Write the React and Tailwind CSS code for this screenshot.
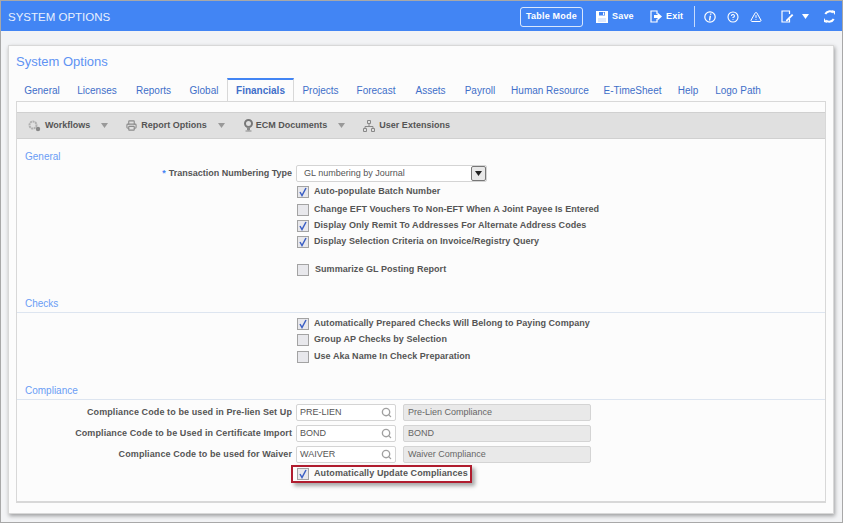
import { Search, Printer, HelpCircle, AlertTriangle } from 'lucide-react'

const tabs = [
  { name: 'General', w: 'w-[52px]' },
  { name: 'Licenses', w: 'w-[58px]' },
  { name: 'Reports', w: 'w-[55px]' },
  { name: 'Global', w: 'w-[46px]' },
  { name: 'Financials', w: 'w-[67px]', active: true },
  { name: 'Projects', w: 'w-[53px]' },
  { name: 'Forecast', w: 'w-[58px]' },
  { name: 'Assets', w: 'w-[51px]' },
  { name: 'Payroll', w: 'w-[48px]' },
  { name: 'Human Resource', w: 'w-[92px]' },
  { name: 'E-TimeSheet', w: 'w-[73px]' },
  { name: 'Help', w: 'w-[38px]' },
  { name: 'Logo Path', w: 'w-[62px]' },
]

function Tri({ className }) {
  return (
    <svg width="7" height="5" viewBox="0 0 7 5" className={className}>
      <path d="M0 0h7L3.5 5z" fill="currentColor" />
    </svg>
  )
}

function Box({ checked }) {
  return (
    <span className="w-3 h-3 border border-[#a3a3a3] bg-[#e8e8ec] flex items-center justify-center shrink-0">
      {checked && (
        <svg width="10" height="10" viewBox="0 0 10 10">
          <path d="M2 5l2 3.5L8 1" fill="none" stroke="#3b5fc4" strokeWidth="1.5" />
        </svg>
      )}
    </span>
  )
}

function Check({ checked, label, className = '', gap = 'gap-[5px]' }) {
  return (
    <div className={`flex items-center h-4 pl-[280px] ${gap} ${className}`}>
      <Box checked={checked} />
      <span className="text-[9px] font-bold tracking-[0.05px] text-[#555]">{label}</span>
    </div>
  )
}

function SectionTitle({ children, className = '' }) {
  return (
    <div className={`pl-[8px] text-[10px] leading-[14px] text-[#6a9cf5] ${className}`}>
      {children}
    </div>
  )
}

function CodeRow({ label, code, desc, className = '' }) {
  return (
    <div className={`flex items-center h-[17px] ${className}`}>
      <div className="w-[275px] text-right text-[9px] font-bold tracking-[0.1px] text-[#555] whitespace-nowrap">{label}</div>
      <div className="ml-[4px] w-[100px] h-[17px] border border-[#d4d4d4] rounded-[2px] bg-white flex items-center justify-between pl-[3px] pr-[3px] text-[9px] text-[#555]">
        {code}
        <Search size={11} strokeWidth={3} className="text-[#a0a0a0]" />
      </div>
      <div className="ml-[7px] w-[188px] h-[17px] border border-[#d4d4d4] rounded-[2px] bg-[#e9e9e9] flex items-center pl-[4px] text-[9px] text-[#666]">
        {desc}
      </div>
    </div>
  )
}

function ToolItem({ icon, label, caret, gap = 'ml-[4px]', className = '' }) {
  return (
    <div className={`flex items-center text-[9px] font-bold text-[#555] ${className}`}>
      {icon}
      <span className={gap}>{label}</span>
      {caret && <Tri className="ml-[11px] text-[#999]" />}
    </div>
  )
}

export default function App() {
  return (
    <div className="w-[843px] h-[523px] bg-[#f2f3f5] border border-[#a8a8a8] overflow-hidden" style={{ fontFamily: '"Liberation Sans", Arial, sans-serif' }}>
      {/* top bar */}
      <div className="h-[30px] bg-[#4285f4] flex items-center text-white pl-[7px] pr-[6px] pt-[1px]">
        <span className="text-[11.5px] pt-[3px] text-[#e8f0fe]">SYSTEM OPTIONS</span>
        <div className="ml-auto flex items-center">
          <div className="w-[63px] h-[20px] border border-white/80 rounded-[3px] flex items-center justify-center text-[9px] font-bold tracking-[0.2px]">Table Mode</div>
          <svg width="12" height="12" viewBox="0 0 12 12" className="ml-[13px]">
            <path d="M0 0h12v12H0z" fill="white" />
            <path d="M3 1h6v3.5H3z" fill="#4285f4" />
            <path d="M7 1.5h1.2v2.5H7z" fill="white" />
            <path d="M2 7h8v4H2z" fill="#dce8fd" />
          </svg>
          <span className="ml-[4px] w-[22px] text-[9px] font-bold tracking-[0.2px]">Save</span>
          <svg width="12" height="13" viewBox="0 0 12 13" className="ml-[16px]">
            <path d="M7 4V1H1v11h6V9" fill="none" stroke="white" strokeWidth="1.2" />
            <path d="M4 5h3.5V2.5L12 6.5l-4.5 4V8H4z" fill="white" />
          </svg>
          <span className="ml-[4px] w-[17px] text-[9px] font-bold tracking-[0.2px]">Exit</span>
          <div className="ml-[11px] w-px h-[21px] bg-white/70" />
          <svg width="12" height="12" viewBox="0 0 12 12" className="ml-[9px]">
            <circle cx="6" cy="6" r="5.2" fill="none" stroke="white" strokeWidth="1.2" />
            <path d="M6.2 2.4h1.4l-.3 1.3H5.9zM5.6 4.8h1.5L6.3 9.4H4.9z" fill="white" />
          </svg>
          <HelpCircle size={12} strokeWidth={2.2} className="ml-[11px]" />
          <AlertTriangle size={12} strokeWidth={2} className="ml-[11px]" />
          <svg width="13" height="13" viewBox="0 0 13 13" className="ml-[19px]">
            <path d="M8.5 4V1H1v11h7.5V9" fill="none" stroke="white" strokeWidth="1.2" />
            <path d="M5 10l6-6 1.3 1.3-6 6H5z" fill="white" />
          </svg>
          <Tri className="ml-[8px] text-white" />
          <svg width="13" height="13" viewBox="0 0 13 13" className="ml-[14px]">
            <path d="M2.3 4A5 5 0 0 1 10 2.6M10.7 9A5 5 0 0 1 3 10.4" fill="none" stroke="white" strokeWidth="2" />
            <path d="M8.5 0L12 1v4zM4.5 13L1 12V8z" fill="white" />
          </svg>
        </div>
      </div>

      {/* card */}
      <div className="mt-[14px] ml-[7px] w-[826px] h-[469px] bg-[#fcfcfc] border border-[#d8d8d8] shadow-[1px_2px_4px_rgba(0,0,0,0.35)] px-[7px]">
        <div className="h-[32px] pt-[7px] text-[13px] leading-[17px] text-[#5f93f3]">System Options</div>

        {/* tabs */}
        <div className="flex h-[23px]">
          {tabs.map(t => (
            <div
              key={t.name}
              className={t.active
                ? `${t.w} h-[23px] bg-[#fcfcfc] border-t-2 border-x border-t-[#4285f4] border-x-[#d8d8d8] text-[10px] font-bold text-[#3f6fc9] flex items-center justify-center`
                : `${t.w} h-[23px] text-[10px] text-[#3f6fc9] flex items-center justify-center whitespace-nowrap pt-[2px]`}
            >
              {t.name}
            </div>
          ))}
        </div>

        {/* panel */}
        <div className="h-[402px] border border-[#d8d8d8] border-b-2">
          <div className="mt-[10px] h-[27px] bg-[#e0e0e0] border-y border-[#d0d0d0] flex items-center pl-[11px]">
            <ToolItem
              label="Workflows"
              caret
              icon={
                <svg width="13" height="12" viewBox="0 0 13 12">
                  <circle cx="5" cy="5" r="3.5" fill="none" stroke="#b0b0b0" strokeWidth="2" strokeDasharray="2 0.6" />
                  <circle cx="10" cy="9" r="2.2" fill="#888" />
                </svg>
              }
            />
            <ToolItem className="ml-[18px]" label="Report Options" caret icon={<Printer size={11} strokeWidth={2.4} className="text-[#8c8c8c]" />} />
            <ToolItem
              className="ml-[18px]"
              gap="ml-[2px]"
              label="ECM Documents"
              caret
              icon={
                <svg width="11" height="13" viewBox="0 0 11 13">
                  <circle cx="5.5" cy="4.5" r="3.5" fill="none" stroke="#777" strokeWidth="2" />
                  <path d="M4.5 8h2v3h-2zM2.5 12h6" stroke="#888" fill="#888" />
                </svg>
              }
            />
            <ToolItem
              className="ml-[18px]"
              label="User Extensions"
              icon={
                <svg width="12" height="12" viewBox="0 0 12 12">
                  <path d="M4.5 .5h3v3h-3zM.5 8.5h3v3h-3zM8.5 8.5h3v3h-3zM6 3.5v3M2 8.5v-2h8v2" fill="none" stroke="#888" />
                </svg>
              }
            />
          </div>

          <SectionTitle className="mt-[11px] h-[15px]">General</SectionTitle>

          <div className="flex items-center h-[17px]">
            <div className="w-[275px] text-right text-[9px] font-bold text-[#555]">
              <span className="text-[#4285f4] mr-[3px]">*</span>Transaction Numbering Type
            </div>
            <div className="ml-[4px] w-[191px] h-[17px] border border-[#d4d4d4] rounded-[2px] bg-white flex items-center justify-between pl-[7px] text-[9px] text-[#555]">
              GL numbering by Journal
              <span className="w-[15px] h-[15px] bg-[#e8e8e8] border border-[#777] rounded-[2px] flex items-center justify-center">
                <Tri className="text-[#222]" />
              </span>
            </div>
          </div>

          <Check checked label="Auto-populate Batch Number" className="mt-[2px]" />
          <Check label="Change EFT Vouchers To Non-EFT When A Joint Payee Is Entered" className="mt-[2px]" />
          <Check checked label="Display Only Remit To Addresses For Alternate Address Codes" />
          <Check checked label="Display Selection Criteria on Invoice/Registry Query" />
          <Check label="Summarize GL Posting Report" className="mt-[12px]" gap="gap-[6px]" />

          <SectionTitle className="mt-[19px] h-[16px] border-b border-[#dde5f0]">Checks</SectionTitle>
          <Check checked label="Automatically Prepared Checks Will Belong to Paying Company" className="mt-[3px]" />
          <Check label="Group AP Checks by Selection" />
          <Check label="Use Aka Name In Check Preparation" className="mt-[1px]" />

          <SectionTitle className="mt-[19px] h-[16px] border-b border-[#dde5f0]">Compliance</SectionTitle>
          <CodeRow className="mt-[4px]" label="Compliance Code to be used in Pre-lien Set Up" code="PRE-LIEN" desc="Pre-Lien Compliance" />
          <CodeRow className="mt-[4px]" label="Compliance Code to be Used in Certificate Import" code="BOND" desc="BOND" />
          <CodeRow className="mt-[4px]" label="Compliance Code to be used for Waiver" code="WAIVER" desc="Waiver Compliance" />

          <div className="ml-[274px] mt-[2px] w-[181px] h-[18px] border-2 border-[#b01c2e] shadow-[3px_3px_4px_rgba(0,0,0,0.35)] flex items-center pl-[4px] gap-[5px]">
            <Box checked />
            <span className="text-[9px] font-bold tracking-[0.1px] text-[#555] whitespace-nowrap">Automatically Update Compliances</span>
          </div>
        </div>
      </div>
    </div>
  )
}
